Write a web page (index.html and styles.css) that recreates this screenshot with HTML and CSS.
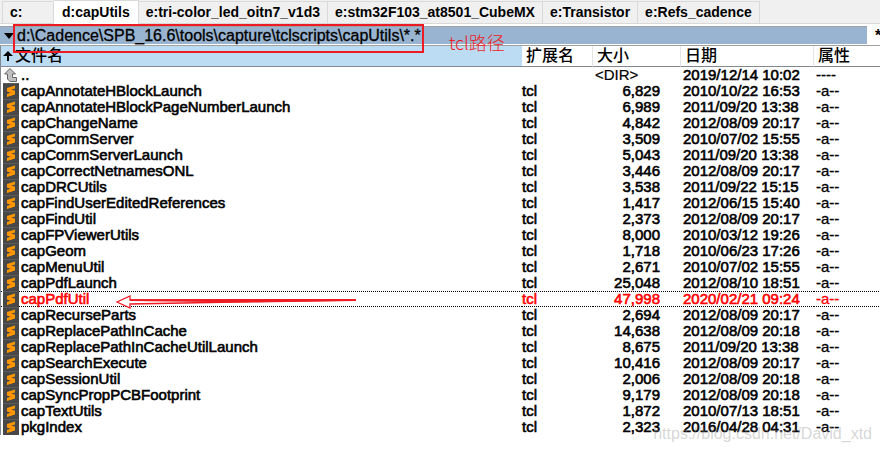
FILE: index.html
```
<!DOCTYPE html>
<html lang="zh-CN">
<head>
    <meta charset="UTF-8">
    <title>capUtils</title>
    <link rel="stylesheet" href="styles.css">
</head>
<body>

<svg class="defs" aria-hidden="true">
    <symbol id="file" viewBox="0 0 16 16">
        <rect width="16" height="16" fill="#484848"/>
        <rect width="16" height="1" fill="#5c5c5c"/>
        <path d="M4 5L12 2.4V5.4L8.4 6.6L12 7.8V11.4L4 14V11L7.6 9.8L4 8.6Z" fill="#ff9800"/>
    </symbol>
    <symbol id="up" viewBox="0 0 16 16">
        <path d="M7 1.5L12.5 7H9.5V10.5H13.5V14.5H7L4.5 12V7H1.5Z" fill="#c0c0c0" stroke="#666" stroke-width="1"/>
    </symbol>
</svg>

<div class="panel">
    <nav class="tabs">
        <button class="tab drive">c:</button>
        <button class="tab active">d:capUtils</button>
        <button class="tab">e:tri-color_led_oitn7_v1d3</button>
        <button class="tab">e:stm32F103_at8501_CubeMX</button>
        <button class="tab">e:Transistor</button>
        <button class="tab">e:Refs_cadence</button>
    </nav>

    <div class="path-row">
        <div class="path">
            <svg class="drop" viewBox="0 0 10 6"><path d="M0 0H10L5 6Z"/></svg>
            <span>d:\Cadence\SPB_16.6\tools\capture\tclscripts\capUtils\*.*</span>
        </div>
        <button class="favorites">*</button>
        <div class="mark-box"></div>
        <span class="mark-label">tcl路径</span>
    </div>

    <table class="files">
        <colgroup>
            <col>
            <col class="col-ext">
            <col class="col-size">
            <col class="col-date">
            <col class="col-attr">
        </colgroup>
        <thead>
            <tr>
                <th class="sorted"><svg class="sort" viewBox="0 0 10 10"><path d="M5 0L10 5H6V10H4V5H0Z"/></svg>文件名</th>
                <th>扩展名</th>
                <th>大小</th>
                <th>日期</th>
                <th>属性</th>
            </tr>
        </thead>
        <tbody id="rows">
            <tr>
                <td><svg class="icon"><use href="#up"/></svg>..</td>
                <td></td>
                <td class="dir">&lt;DIR&gt;</td>
                <td>2019/12/14 10:02</td>
                <td>----</td>
            </tr>
        </tbody>
    </table>

    <svg class="arrow" viewBox="0 0 242 14">
        <path d="M240 5L14 5V1L1 7L14 13V9L120 7Z" fill="#fff" stroke="#ed1c24" stroke-width="1.3"/>
        <path d="M14 4.2L240 4V6L130 7.5L14 6Z" fill="#ed1c24"/>
    </svg>
    <span class="watermark">https://blog.csdn.net/David_xtd</span>
</div>

<script>
const files = [
    ["capAnnotateHBlockLaunch", "6,829", "2010/10/22 16:53"],
    ["capAnnotateHBlockPageNumberLaunch", "6,989", "2011/09/20 13:38"],
    ["capChangeName", "4,842", "2012/08/09 20:17"],
    ["capCommServer", "3,509", "2010/07/02 15:55"],
    ["capCommServerLaunch", "5,043", "2011/09/20 13:38"],
    ["capCorrectNetnamesONL", "3,446", "2012/08/09 20:17"],
    ["capDRCUtils", "3,538", "2011/09/22 15:15"],
    ["capFindUserEditedReferences", "1,417", "2012/06/15 15:40"],
    ["capFindUtil", "2,373", "2012/08/09 20:17"],
    ["capFPViewerUtils", "8,000", "2010/03/12 19:26"],
    ["capGeom", "1,718", "2010/06/23 17:26"],
    ["capMenuUtil", "2,671", "2010/07/02 15:55"],
    ["capPdfLaunch", "25,048", "2012/08/10 18:51"],
    ["capPdfUtil", "47,998", "2020/02/21 09:24"],
    ["capRecurseParts", "2,694", "2012/08/09 20:17"],
    ["capReplacePathInCache", "14,638", "2012/08/09 20:18"],
    ["capReplacePathInCacheUtilLaunch", "8,675", "2011/09/20 13:38"],
    ["capSearchExecute", "10,416", "2012/08/09 20:17"],
    ["capSessionUtil", "2,006", "2012/08/09 20:18"],
    ["capSyncPropPCBFootprint", "9,179", "2012/08/09 20:18"],
    ["capTextUtils", "1,872", "2010/07/13 18:51"],
    ["pkgIndex", "2,323", "2016/04/28 04:31"]
];

const rows = document.getElementById("rows");
files.forEach(([name, size, date]) => {
    const tr = document.createElement("tr");
    // selected file
    if (name === "capPdfUtil") {
        tr.className = "selected";
    }
    tr.innerHTML = `<td><svg class="icon"><use href="#file"/></svg>${name}</td>
        <td>tcl</td><td>${size}</td><td>${date}</td><td>-a--</td>`;
    rows.appendChild(tr);
});
</script>

</body>
</html>
```
FILE: styles.css
```
* {
    box-sizing: border-box;
}
body {
    margin: 0;
    background: white;
    color: black;
    font-family: "Liberation Sans", "Noto Sans CJK SC", sans-serif;
}
button {
    border: none;
    background: none;
    padding: 0;
    color: black;
    font-family: inherit;
}
.defs {
    position: absolute;
    width: 0;
    height: 0;
}
.panel {
    position: relative;
    min-height: 100vh;
}
.tabs {
    display: flex;
    align-items: flex-end;
    height: 24px;
    padding-left: 2px;
    background: #f0f0f0;
    border-bottom: 1px solid #d9d9d9;
}
.tab {
    height: 22px;
    padding: 0 7px;
    border: 1px solid #d9d9d9;
    border-width: 1px 1px 0 0;
    font-size: 14px;
    font-weight: bold;
    line-height: 21px;
    white-space: nowrap;
}
.drive {
    width: 52px;
    border-left-width: 1px;
    text-align: left;
}
.active {
    height: 24px;
    margin-bottom: -1px;
    padding: 0 8px;
    background: white;
}
.path-row {
    position: relative;
    display: flex;
    height: 22px;
    padding-top: 2px;
    border-bottom: 1px solid #a0a0a0;
}
.path {
    display: flex;
    flex: 1;
    align-items: center;
    gap: 3px;
    height: 18px;
    padding-left: 4px;
    background: #99b4d1;
    border-top: 1px solid #a0a0a0;
    font-size: 16px;
    -webkit-text-stroke: 0.3px black;
}
.drop {
    width: 10px;
    height: 6px;
}
.favorites {
    width: 13px;
    padding-left: 8px;
    overflow: hidden;
    font-size: 16px;
    font-weight: bold;
}
.mark-box {
    position: absolute;
    left: 13px;
    top: 0;
    width: 411px;
    height: 29px;
    border: 2px solid #ed1c24;
}
.mark-label {
    position: absolute;
    left: 449px;
    top: 6px;
    color: #ed1c24;
    font-family: "Noto Sans CJK SC", sans-serif;
    font-size: 18px;
    font-weight: 300;
    line-height: 24px;
}
.files {
    width: 100%;
    table-layout: fixed;
    border-collapse: separate;
    border-spacing: 0;
    border-left: 1px solid #828790;
}
.col-ext {
    width: 71px;
}
.col-size {
    width: 88px;
}
.col-date {
    width: 133px;
}
.col-attr {
    width: 66px;
}
.files th {
    height: 21px;
    padding: 0 0 0 4px;
    border-bottom: 1px solid #828790;
    border-right: 1px solid #e5e5e5;
    font-size: 16px;
    font-weight: 500;
    line-height: 20px;
    text-align: left;
}
.files th.sorted {
    padding-left: 2px;
    background: #bcdcf4;
    border-right: none;
}
.files th:last-child {
    border-right: none;
}
.sort {
    width: 10px;
    height: 10px;
    margin-right: 2px;
}
.files td {
    height: 16px;
    padding: 0 0 0 2px;
    font-size: 15px;
    line-height: 16px;
    white-space: nowrap;
    -webkit-text-stroke: 0.6px;
}
.files td:nth-child(2) {
    padding-left: 0;
}
.files td:nth-child(3) {
    padding-right: 21px;
    text-align: right;
}
.files td.dir {
    text-align: left;
    -webkit-text-stroke: 0.2px;
}
.files td:last-child {
    -webkit-text-stroke: 0.3px;
}
.icon {
    width: 16px;
    height: 16px;
    margin-right: 2px;
    vertical-align: top;
    -webkit-text-stroke: 0;
}
.files .selected td {
    color: red;
    background: repeating-linear-gradient(to right, black 0 1px, white 1px 2px) top / 100% 1px no-repeat,
        repeating-linear-gradient(to right, black 0 1px, white 1px 2px) bottom / 100% 1px no-repeat;
}
.arrow {
    position: absolute;
    left: 116px;
    top: 295px;
    width: 242px;
    height: 14px;
}
.watermark {
    position: absolute;
    right: 8px;
    bottom: 8px;
    color: rgba(150, 150, 150, 0.4);
    font-size: 16px;
    line-height: 20px;
}
```
